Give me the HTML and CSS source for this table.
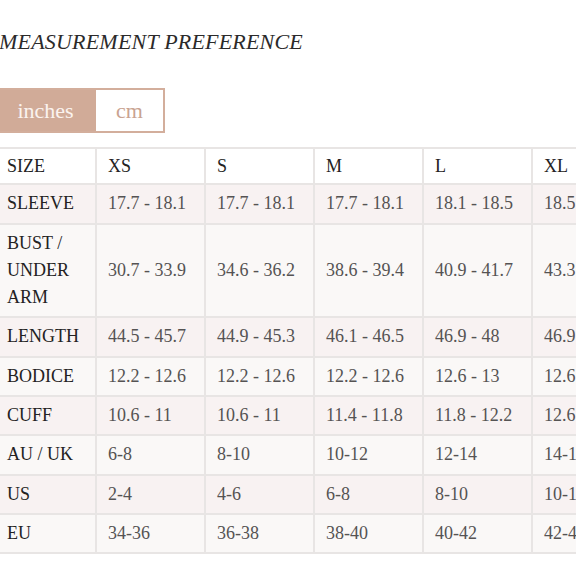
FILE: index.html
```html
<!DOCTYPE html>
<html lang="en">
<head>
<meta charset="utf-8">
<title>Size chart</title>
<link rel="stylesheet" href="styles.css">
</head>
<body>
<div class="page">
  <h2 class="pref-title">Measurement Preference</h2>
  <div class="unit-toggle">
    <button class="unit unit-inches is-active" type="button">inches</button>
    <button class="unit unit-cm" type="button">cm</button>
  </div>
  <div class="table-wrap">
    <table class="size-chart">
      <colgroup>
        <col class="col-label">
        <col class="col-size">
        <col class="col-size">
        <col class="col-size">
        <col class="col-size">
        <col class="col-size">
      </colgroup>
      <thead>
        <tr class="row-head">
          <th>SIZE</th><th>XS</th><th>S</th><th>M</th><th>L</th><th>XL</th>
        </tr>
      </thead>
      <tbody>
        <tr class="row-pink">
          <th>SLEEVE</th><td>17.7 - 18.1</td><td>17.7 - 18.1</td><td>17.7 - 18.1</td><td>18.1 - 18.5</td><td>18.5 - 18.9</td>
        </tr>
        <tr class="row-light">
          <th>BUST / UNDER ARM</th><td>30.7 - 33.9</td><td>34.6 - 36.2</td><td>38.6 - 39.4</td><td>40.9 - 41.7</td><td>43.3 - 44.1</td>
        </tr>
        <tr class="row-pink">
          <th>LENGTH</th><td>44.5 - 45.7</td><td>44.9 - 45.3</td><td>46.1 - 46.5</td><td>46.9 - 48</td><td>46.9 - 48</td>
        </tr>
        <tr class="row-light">
          <th>BODICE</th><td>12.2 - 12.6</td><td>12.2 - 12.6</td><td>12.2 - 12.6</td><td>12.6 - 13</td><td>12.6 - 13</td>
        </tr>
        <tr class="row-pink">
          <th>CUFF</th><td>10.6 - 11</td><td>10.6 - 11</td><td>11.4 - 11.8</td><td>11.8 - 12.2</td><td>12.6 - 13</td>
        </tr>
        <tr class="row-light">
          <th>AU / UK</th><td>6-8</td><td>8-10</td><td>10-12</td><td>12-14</td><td>14-16</td>
        </tr>
        <tr class="row-pink">
          <th>US</th><td>2-4</td><td>4-6</td><td>6-8</td><td>8-10</td><td>10-12</td>
        </tr>
        <tr class="row-light">
          <th>EU</th><td>34-36</td><td>36-38</td><td>38-40</td><td>40-42</td><td>42-44</td>
        </tr>
      </tbody>
    </table>
  </div>
</div>
</body>
</html>
```
FILE: styles.css
```css
html, body {
  margin: 0;
  padding: 0;
  background: #ffffff;
}

body {
  font-family: "Liberation Serif", "Times New Roman", serif;
  color: #222222;
}

.page {
  margin-left: -6px;
  padding-top: 29px;
}

.pref-title {
  margin: 0;
  padding-left: 5px;
  font-size: 22px;
  line-height: 26px;
  font-style: italic;
  font-weight: normal;
  letter-spacing: 0.2px;
  text-transform: uppercase;
  color: #2b2a2a;
}

.unit-toggle {
  display: inline-flex;
  margin-top: 33px;
  margin-left: -1px;
  border: 2px solid #d3ae9c;
}

.unit {
  height: 41px;
  padding: 0;
  border: 0;
  font-family: inherit;
  font-size: 22px;
  line-height: 41px;
  background: #ffffff;
  color: #c9a391;
  cursor: pointer;
}

.unit-inches {
  width: 101px;
}

.unit-cm {
  width: 67px;
}

.unit.is-active {
  background: #d1ab98;
  color: #fbf3ef;
}

.table-wrap {
  width: 582px;
  overflow: hidden;
  margin-top: 13px;
  padding-top: 1px;
}

.size-chart {
  border-collapse: collapse;
  table-layout: fixed;
  width: 646px;
  font-size: 18px;
  line-height: 27.3px;
}

.col-label {
  width: 101px;
}

.col-size {
  width: 109px;
}

.size-chart th,
.size-chart td {
  border: 2px solid #e8e5e4;
  padding: 5px 11px;
  text-align: left;
  vertical-align: middle;
  font-weight: normal;
  white-space: normal;
}

.size-chart th {
  color: #232222;
}

.size-chart td {
  color: #555353;
  white-space: nowrap;
}

.row-head th {
  padding-top: 3.5px;
  padding-bottom: 3.5px;
  background: #ffffff;
}

.row-pink th,
.row-pink td {
  background: #f8f2f2;
}

.row-light th,
.row-light td {
  background: #faf8f7;
}
```
